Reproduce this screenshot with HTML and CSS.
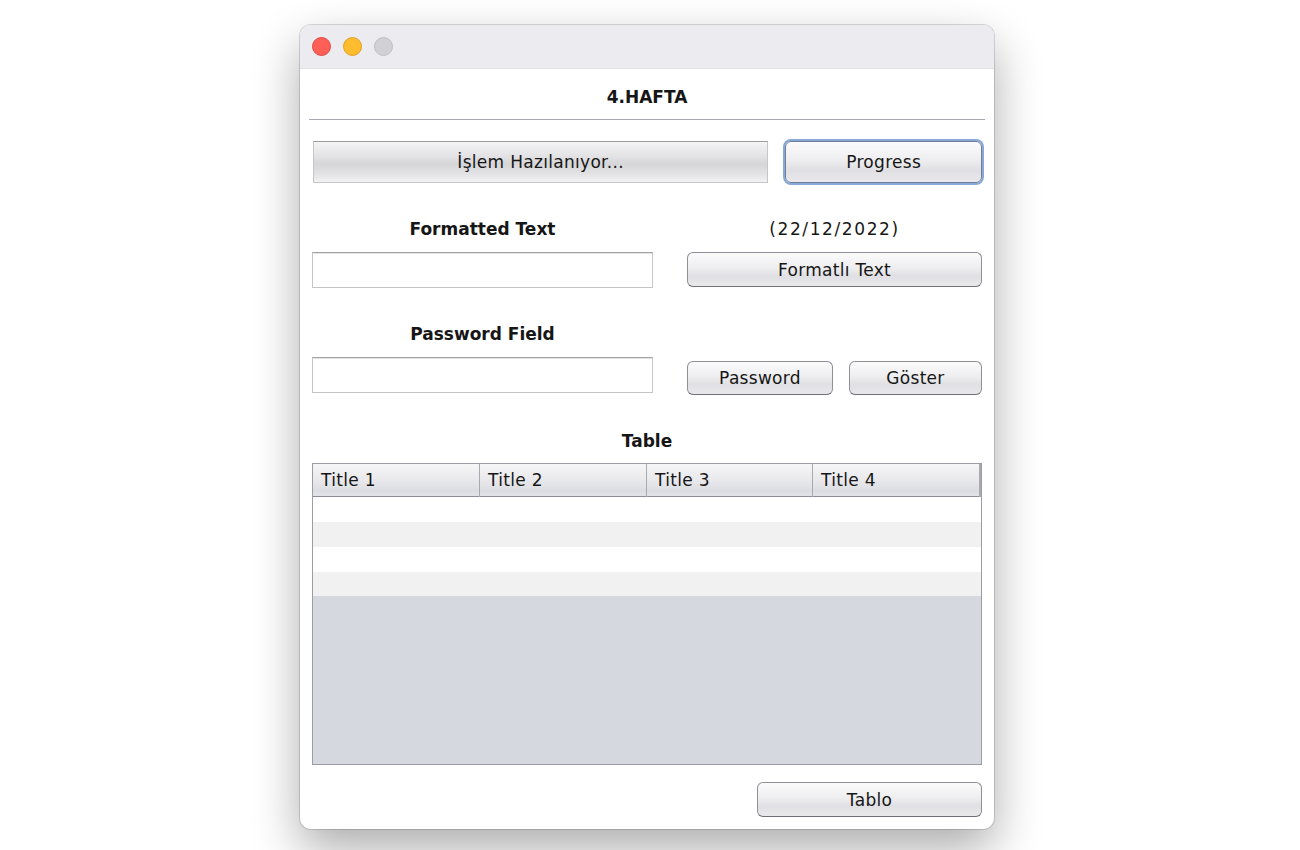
FILE: index.html
```html
<!DOCTYPE html>
<html lang="tr">
<head>
<meta charset="utf-8">
<title>4.HAFTA</title>
<link rel="stylesheet" href="styles.css">
</head>
<body>
<div class="window">
  <div class="titlebar">
    <span class="light red"></span>
    <span class="light yellow"></span>
    <span class="light gray"></span>
  </div>
  <div class="content">
    <div class="heading">4.HAFTA</div>
    <div class="sep"></div>

    <div class="row-progress">
      <div class="progress">İşlem Hazılanıyor...</div>
      <button class="btn btn-focus">Progress</button>
    </div>

    <div class="grid sec-formatted">
      <div class="label bold">Formatted Text</div>
      <div class="label date">(22/12/2022)</div>
      <div class="field"></div>
      <button class="btn btn-wide">Formatlı Text</button>
    </div>

    <div class="grid sec-password">
      <div class="label bold">Password Field</div>
      <div></div>
      <div class="field"></div>
      <div class="btn-pair">
        <button class="btn btn-pw">Password</button>
        <button class="btn btn-show">Göster</button>
      </div>
    </div>

    <div class="label bold table-label">Table</div>
    <div class="table">
      <div class="thead">
        <div class="th">Title 1</div>
        <div class="th">Title 2</div>
        <div class="th">Title 3</div>
        <div class="th last">Title 4</div>
      </div>
      <div class="tr"></div>
      <div class="tr alt"></div>
      <div class="tr"></div>
      <div class="tr alt"></div>
    </div>

    <div class="footer">
      <button class="btn btn-tablo">Tablo</button>
    </div>
  </div>
</div>
</body>
</html>
```
FILE: styles.css
```css
html, body {
  margin: 0;
  padding: 0;
  background: #ffffff;
}
html {
  min-height: 850px;
}
body {
  font-family: "DejaVu Sans", "Liberation Sans", sans-serif;
  font-size: 17px;
  color: #161616;
  padding-top: 25px;
  padding-left: 300px;
  min-height: 850px;
  box-sizing: border-box;
  overflow: hidden;
}
.window {
  width: 694px;
  height: 804px;
  background: #ffffff;
  border-radius: 11px;
  overflow: hidden;
  box-shadow: 0 20px 48px rgba(0, 0, 0, 0.33), 0 0 0 1px rgba(0, 0, 0, 0.14);
  display: flex;
  flex-direction: column;
}
.titlebar {
  height: 43px;
  background: #ecebf0;
  border-bottom: 1px solid #dfdfe3;
  display: flex;
  align-items: center;
  padding-left: 12px;
  gap: 12px;
  flex: none;
}
.light {
  width: 19px;
  height: 19px;
  border-radius: 50%;
  box-sizing: border-box;
}
.red { background: #fe5f57; border: 1px solid #e2463f; }
.yellow { background: #febc2e; border: 1px solid #dfa123; }
.gray { background: #d1d0d5; border: 1px solid #bfbec3; }

.content {
  padding: 0 12px;
  display: flex;
  flex-direction: column;
}
.heading {
  height: 45px;
  padding-top: 5px;
  line-height: 47px;
  text-align: center;
  font-weight: bold;
}
.sep {
  height: 1px;
  background: #a8a8b0;
  margin: 0 -3px;
}

.row-progress {
  margin-top: 21px;
  display: flex;
  align-items: center;
  gap: 17px;
}
.progress {
  width: 456px;
  height: 42px;
  box-sizing: border-box;
  border: 1px solid #c6c6c8;
  border-top-color: #9c9c9e;
  background: linear-gradient(#f4f4f5 0%, #e3e3e5 35%, #d6d6d8 55%, #e4e4e6 82%, #f2f2f3 100%);
  display: flex;
  align-items: center;
  justify-content: center;
  margin-left: 1px;
  letter-spacing: 0.3px;
}

.btn {
  font-family: inherit;
  font-size: 17px;
  letter-spacing: 0.3px;
  color: #161616;
  box-sizing: border-box;
  border: 1px solid #8f8f95;
  border-bottom-color: #6f6f75;
  border-radius: 6px;
  background: linear-gradient(#fbfbfc 0%, #eeeef0 45%, #e0e0e4 70%, #e9e9ec 100%);
  padding: 0;
  margin: 0;
  display: flex;
  align-items: center;
  justify-content: center;
}
.btn-focus {
  width: 197px;
  height: 42px;
  box-shadow: 0 0 0 2px #88a9d6;
  border-color: #6d7f9b;
}

.grid {
  display: grid;
  grid-template-columns: 341px 295px;
  column-gap: 34px;
  row-gap: 14px;
  margin-top: 35px;
}
.label {
  height: 20px;
  line-height: 22px;
  text-align: center;
}
.date {
  letter-spacing: 1.6px;
}
.bold { font-weight: bold; }
.field {
  height: 36px;
  box-sizing: border-box;
  border: 1px solid #c5c5c5;
  border-top-color: #a2a2a2;
  box-shadow: inset 0 1px 0 #e4e4e4;
  background: #ffffff;
}
.btn-wide {
  height: 35px;
}
.btn-pair {
  display: flex;
  gap: 16px;
  margin-top: 4px;
}
.btn-pw {
  width: 146px;
  height: 34px;
}
.btn-show {
  width: 133px;
  height: 34px;
}

.table-label {
  margin-top: 35px;
}
.table {
  margin-top: 13px;
  height: 302px;
  box-sizing: border-box;
  border: 1px solid #9c9ca6;
  background: #d6d8df;
  display: flex;
  flex-direction: column;
}
.thead {
  height: 32px;
  flex: none;
  display: grid;
  grid-template-columns: 167px 167px 166px 1fr;
  border-bottom: 1px solid #8c8c96;
  background: linear-gradient(#f6f6f7 0%, #e9e9ec 50%, #dcdde2 85%, #e3e3e7 100%);
}
.th {
  border-right: 1px solid #a9a9b1;
  padding-left: 8px;
  line-height: 33px;
  letter-spacing: 0.3px;
}
.th.last {
  border-right: 2px solid #a9a9b1;
}
.tr {
  height: 25px;
  background: #ffffff;
  flex: none;
}
.tr.alt {
  background: #f0f1f0;
}
.tr.alt:last-child {
  height: 24px;
}

.footer {
  margin-top: 17px;
  display: flex;
  justify-content: flex-end;
}
.btn-tablo {
  width: 225px;
  height: 35px;
}
```
